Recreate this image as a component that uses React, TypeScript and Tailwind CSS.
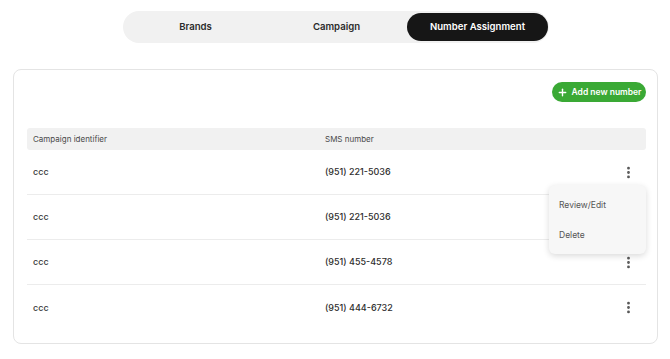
import React from "react";
import { EllipsisVertical, Plus } from "lucide-react";

const rows = [
  { id: "ccc", num: "(951) 221-5036" },
  { id: "ccc", num: "(951) 221-5036" },
  { id: "ccc", num: "(951) 455-4578" },
  { id: "ccc", num: "(951) 444-6732" },
];

export default function App() {
  return (
    <div
      className="w-[670px] h-[359px] bg-white pt-[11px] text-[#2b2b2b]"
      style={{ fontFamily: "Inter, 'Noto Sans', sans-serif" }}
    >
      <div className="ml-[123px] w-[426px] h-[32px] rounded-full bg-[#f1f1f1] pl-[2px] pr-[1px] py-[2px] grid grid-cols-3 text-[9.6px] font-semibold">
        <div className="flex items-center justify-center text-[#2b2b2b]">Brands</div>
        <div className="flex items-center justify-center text-[#2b2b2b]">Campaign</div>
        <div className="flex items-center justify-center rounded-full bg-[#161616] text-white">
          Number Assignment
        </div>
      </div>

      <div className="relative mt-[26px] ml-[13px] w-[645px] rounded-[8px] border border-[#e4e4e4] pt-[12px] pb-[13px] pl-[13px] pr-[11px]">
        <div className="flex justify-end">
          <button className="flex items-center gap-[4px] h-[20px] w-[94px] justify-center rounded-full bg-[#3aa935] text-white text-[8.5px] font-semibold">
            <Plus size={11} strokeWidth={3} />
            Add new number
          </button>
        </div>
        <div className="mt-[26px]">
          <div className="flex items-center h-[22px] rounded-[3px] bg-[#f1f1f1] text-[8px] text-[#4a4a4a]">
            <div className="w-[298px] pl-[6px]">Campaign identifier</div>
            <div>SMS number</div>
          </div>
          {rows.map((r, i) => (
            <div
              key={i}
              className={`flex items-center h-[45px] text-[9px] font-medium ${
                i < rows.length - 1 ? "border-b border-[#ececec]" : ""
              }`}
            >
              <div className="w-[298px] pl-[6px] text-[#3a3a3a]">{r.id}</div>
              <div className="flex-1 text-[#2e2e2e]">{r.num}</div>
              <div className="w-[24px] flex justify-center mr-[6px] text-[#555]">
                <EllipsisVertical size={15} strokeWidth={2.5} />
              </div>
            </div>
          ))}
        </div>

        <div className="absolute left-[535px] top-[115px] w-[97px] h-[69px] rounded-[6px] bg-[#f7f7f7] shadow-[0_2px_6px_rgba(0,0,0,0.15)] flex flex-col justify-center gap-[17px] pl-[10px] pt-[2px] text-[8.5px] text-[#555]">
          <div>Review/Edit</div>
          <div>Delete</div>
        </div>
      </div>
    </div>
  );
}
